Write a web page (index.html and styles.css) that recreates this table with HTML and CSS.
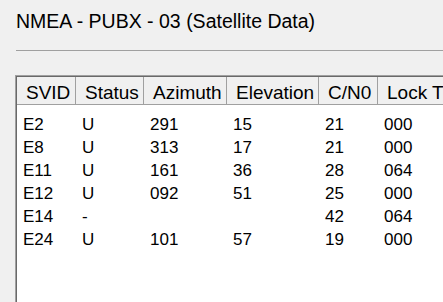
FILE: index.html
```html
<!DOCTYPE html>
<html>
<head>
<meta charset="utf-8">
<link rel="stylesheet" href="styles.css">
</head>
<body>
<div class="page">
  <div class="title">NMEA - PUBX - 03 (Satellite Data)</div>
  <div class="sep"></div>
  <div class="list">
    <div class="row head">
      <div class="hc">SVID</div>
      <div class="hc">Status</div>
      <div class="hc">Azimuth</div>
      <div class="hc">Elevation</div>
      <div class="hc">C/N0</div>
      <div class="hc">Lock T</div>
    </div>
    <div class="rows">
      <div class="row"><div class="c">E2</div><div class="c">U</div><div class="c">291</div><div class="c">15</div><div class="c">21</div><div class="c">000</div></div>
      <div class="row"><div class="c">E8</div><div class="c">U</div><div class="c">313</div><div class="c">17</div><div class="c">21</div><div class="c">000</div></div>
      <div class="row"><div class="c">E11</div><div class="c">U</div><div class="c">161</div><div class="c">36</div><div class="c">28</div><div class="c">064</div></div>
      <div class="row"><div class="c">E12</div><div class="c">U</div><div class="c">092</div><div class="c">51</div><div class="c">25</div><div class="c">000</div></div>
      <div class="row"><div class="c">E14</div><div class="c">-</div><div class="c"></div><div class="c"></div><div class="c">42</div><div class="c">064</div></div>
      <div class="row"><div class="c">E24</div><div class="c">U</div><div class="c">101</div><div class="c">57</div><div class="c">19</div><div class="c">000</div></div>
    </div>
  </div>
</div>
</body>
</html>
```
FILE: styles.css
```css
html, body {
  margin: 0;
  padding: 0;
  background: #f0f0f0;
  overflow: hidden;
  height: 302px;
}
.page {
  padding: 11px 0 0 16px;
  font-family: "Liberation Sans", Arial, sans-serif;
  color: #000;
  height: 291px;
  overflow: hidden;
}
.title {
  font-size: 19.5px;
  line-height: 20px;
  white-space: nowrap;
}
.sep {
  height: 1px;
  background: #a0a0a0;
  margin-top: 19px;
}
.list {
  margin-top: 24px;
  margin-left: -1px;
  width: 428px;
  height: 230px;
  background: #fff;
  border-top: 1px solid #a0a0a0;
  border-left: 1px solid #a0a0a0;
  box-shadow: inset 1px 1px 0 #696969;
  padding: 1px 0 0 1px;
  box-sizing: border-box;
  overflow: hidden;
}
.row {
  display: grid;
  grid-template-columns: 59px 68px 83px 92px 59px 100px;
}
.head {
  background: #f0f0f0;
  border-bottom: 1px solid #a0a0a0;
}
.hc {
  font-size: 19px;
  line-height: 23px;
  padding: 4px 0 0 9px;
  border-right: 1px solid #a0a0a0;
  white-space: nowrap;
}
.rows {
  padding-top: 8px;
}
.c {
  font-size: 17px;
  line-height: 23px;
  height: 23px;
  padding-left: 6px;
  white-space: nowrap;
}
```
